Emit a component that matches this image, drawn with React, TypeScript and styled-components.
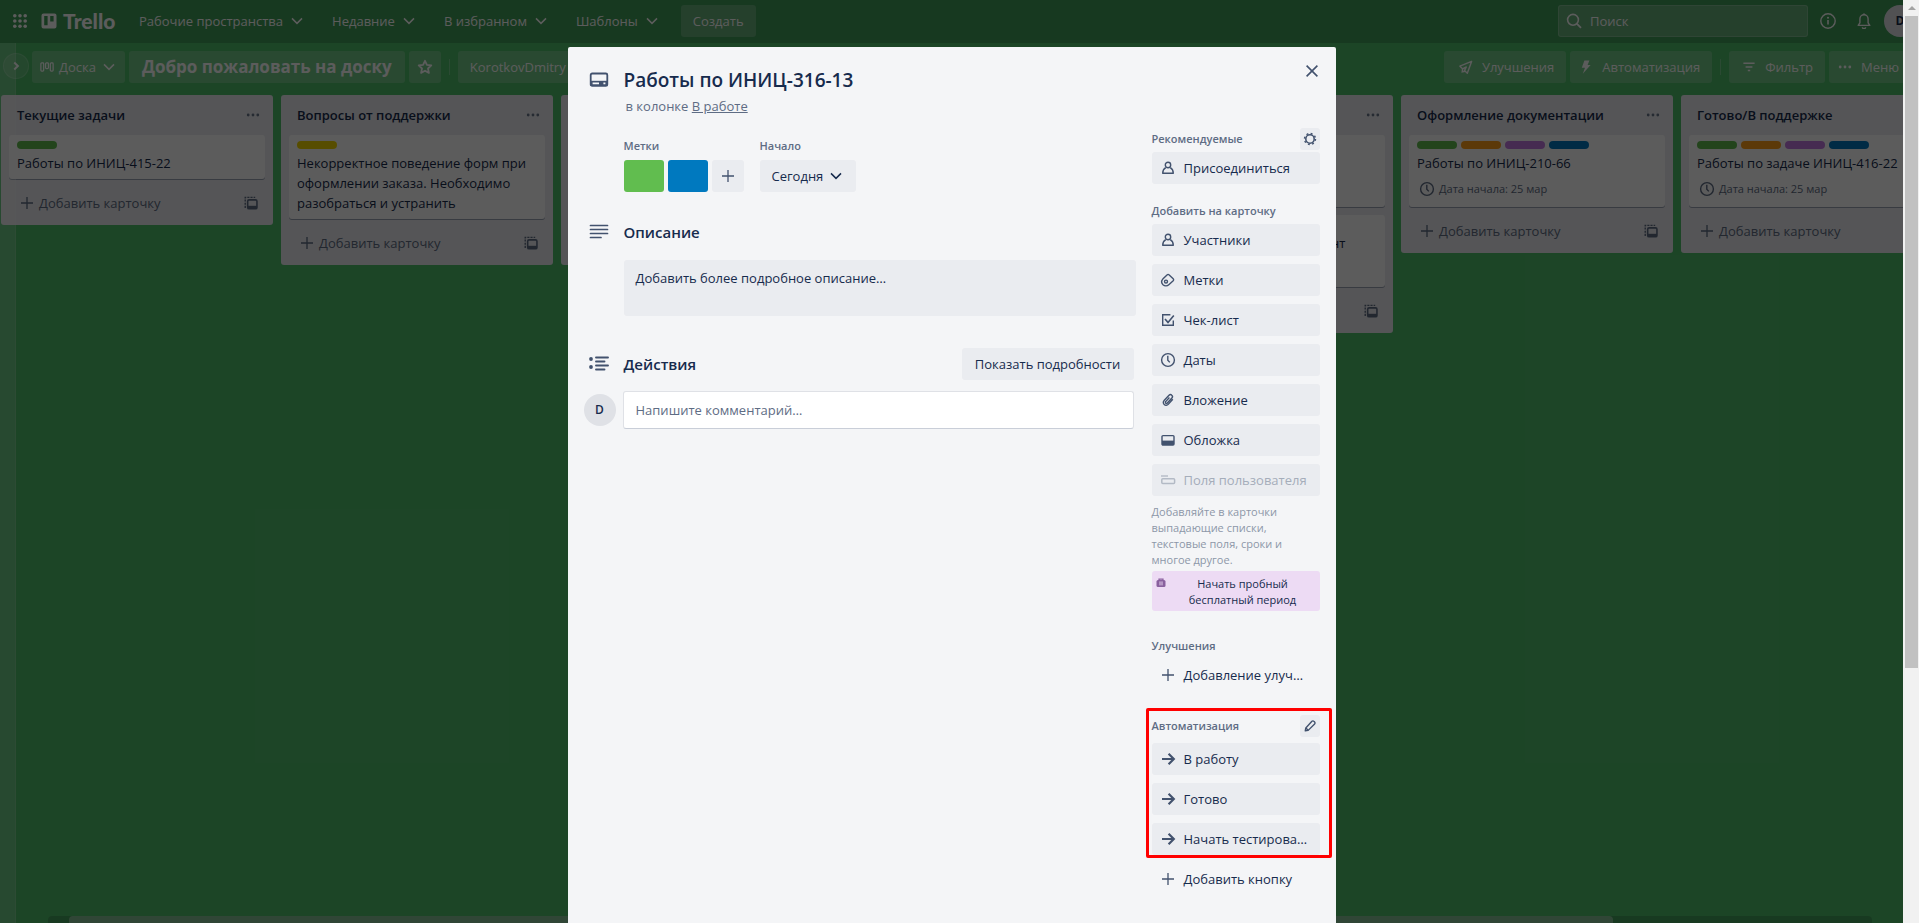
import React from 'react';
import styled, { createGlobalStyle, css } from 'styled-components';

const GlobalStyle = createGlobalStyle`
  *, *::before, *::after { box-sizing: border-box; }
  body {
    margin: 0;
    overflow: hidden;
    font-family: 'Open Sans', 'Noto Sans', sans-serif;
    font-size: 13px;
    line-height: 20px;
    color: #172b4d;
  }
  button, input { font: inherit; color: inherit; border: 0; margin: 0; padding: 0; background: none; }
  button { cursor: pointer; white-space: nowrap; }
  h1, h2, h3, p { margin: 0; padding: 0; font-weight: inherit; font-size: inherit; }
  svg { display: block; flex: none; }
`;

/* ---------- icons ---------- */

type IconProps = { size?: number };

const Svg = ({ size = 16, children }: IconProps & { children: React.ReactNode }) => (
  <svg width={size} height={size} viewBox="0 0 16 16" fill="none" stroke="currentColor" strokeWidth="1.4" aria-hidden="true">
    {children}
  </svg>
);

const ChevronDown = () => (
  <Svg><path d="M3 5.4 8 10.4l5-5" strokeWidth="1.5" /></Svg>
);
const PlusIcon = () => (
  <Svg><path d="M8 2v12M2 8h12" strokeWidth="1.3" /></Svg>
);
const DotsIcon = () => (
  <Svg>
    <g fill="currentColor" stroke="none">
      <circle cx="3.2" cy="8" r="1.4" /><circle cx="8" cy="8" r="1.4" /><circle cx="12.8" cy="8" r="1.4" />
    </g>
  </Svg>
);
const AppsIcon = () => (
  <Svg>
    <g fill="currentColor" stroke="none">
      {[2.8, 8, 13.2].map((y) => [2.8, 8, 13.2].map((x) => <circle key={`${x}-${y}`} cx={x} cy={y} r="1.8" />))}
    </g>
  </Svg>
);
const LogoIcon = () => (
  <Svg>
    <path
      fill="currentColor" stroke="none" fillRule="evenodd"
      d="M2.5.5h11a2 2 0 0 1 2 2v11a2 2 0 0 1-2 2h-11a2 2 0 0 1-2-2v-11a2 2 0 0 1 2-2ZM3.2 2.9v9.4h3.4V2.9H3.2Zm6 0v5.7h3.4V2.9H9.2Z"
    />
  </Svg>
);
const SearchIcon = () => (
  <Svg><circle cx="7" cy="6.8" r="5.4" strokeWidth="1.6" /><path d="m11 10.8 4 4" strokeWidth="1.8" /></Svg>
);
const InfoIcon = () => (
  <Svg>
    <circle cx="8" cy="8" r="7.2" /><path d="M8 7v4.6" strokeWidth="1.6" /><circle cx="8" cy="4.7" r="1" fill="currentColor" stroke="none" />
  </Svg>
);
const BellIcon = () => (
  <Svg>
    <path d="M2.2 12.4h11.6l-1.7-2.6V5.9a4.1 4.1 0 0 0-8.2 0v3.9l-1.7 2.6Z" strokeLinejoin="round" />
    <path d="M6.4 14.2a1.6 1.4 0 0 0 3.2 0" /><path d="M8 .4v1.6" strokeWidth="1.8" />
  </Svg>
);
const BoardIcon = () => (
  <Svg size={14}>
    <rect x="1" y="3.4" width="3.2" height="9.4" rx="1" /><rect x="6.4" y="3.4" width="3.2" height="6.4" rx="1" />
    <rect x="11.8" y="3.4" width="3.2" height="9.4" rx="1" />
  </Svg>
);
const StarIcon = () => (
  <Svg>
    <path d="m8 1.8 1.9 4.1 4.4.5L11 9.5l.9 4.4L8 11.7l-3.9 2.2.9-4.4-3.3-3.1 4.4-.5L8 1.8Z" strokeWidth="1.8" strokeLinejoin="round" />
  </Svg>
);
const ArrowHead = () => (
  <Svg size={14}><path d="M6 4l4.2 4L6 12" strokeWidth="2.2" /></Svg>
);
const RocketIcon = () => (
  <Svg>
    <path d="M13.6 2.4 1.9 7.2l2.6 2.6 3.8-1.8-1.8 3.6 2.8 2.6L13.6 2.4Z" strokeLinejoin="round" /><path d="m4.6 9.8-.4 3 3-.6" />
  </Svg>
);
const BoltIcon = () => (
  <Svg><path d="M6.4 1.4h5L9.6 6h3L4.8 14.8 7 8.8H3.8L6.4 1.4Z" fill="currentColor" stroke="none" /></Svg>
);
const FilterIcon = () => (
  <Svg><path d="M2.4 4.2h11.2M4.6 8h6.8M6.8 11.6h2.4" strokeWidth="1.5" /></Svg>
);
const TemplateIcon = () => (
  <Svg size={14}>
    <path d="M1.4 13.6V1.6h11.4" strokeDasharray="2.4 1.2" strokeWidth="1.6" />
    <rect x="4.2" y="4.4" width="10.6" height="10.2" rx="1.6" strokeWidth="1.8" />
    <path d="M4.4 11.2h10.4v2.6H4.4z" fill="currentColor" stroke="none" />
  </Svg>
);
const ClockIcon = () => (
  <Svg><circle cx="8" cy="8" r="6.4" /><path d="M7.8 3.8v4.4l2 2.2" /></Svg>
);
const PersonIcon = () => (
  <Svg>
    <circle cx="8" cy="5" r="2.7" />
    <path d="M5.8 7.6C3.6 8.8 2.7 10.8 2.7 13.2h10.6c0-2.400-.9-4.400-3.100-5.600" strokeLinejoin="round" />
  </Svg>
);
const TagIcon = () => (
  <Svg>
    <path d="M7 2.9a1.6 1.6 0 0 1 2.2 0l4 3.9a1.4 1.4 0 0 1 0 2l-4.4 4c-1.6 1.4-4.2 1.4-5.8-.1-1.6-1.6-1.6-4-.2-5.6L7 2.9Z" />
    <circle cx="6" cy="9.6" r="1.5" />
  </Svg>
);
const CheckIcon = () => (
  <Svg><path d="M10.4 2.8H2.7v10.5h10.6V8.6" /><path d="m5 7 3 3.4 5.8-7" strokeWidth="1.6" /></Svg>
);
const ClipIcon = () => (
  <Svg>
    <path
      d="m12.8 7.2-4.6 5.2c-1 1.1-2.8 1.3-4 .2-1.2-1.1-1.2-2.9-.1-4L9 3.3c.8-.8 2-.9 2.8-.1.8.7.8 2 .1 2.8L7.3 11c-.4.5-1.1.5-1.6.1-.4-.4-.4-1.1 0-1.5l3.7-4.1"
    />
  </Svg>
);
const CoverIcon = () => (
  <Svg><rect x="2" y="3.6" width="12" height="9.4" rx="1" /><path d="M2 8.6h12V13H2z" fill="currentColor" stroke="none" /></Svg>
);
const FieldsIcon = () => (
  <Svg><path d="M1 4h7" /><rect x="1.8" y="6.8" width="12.8" height="4.6" rx="1" strokeWidth="1.5" /></Svg>
);
const GearIcon = () => (
  <Svg size={14}>
    <circle cx="8" cy="8" r="4.8" strokeWidth="1.8" />
    <circle cx="8" cy="8" r="6.3" strokeWidth="1.6" strokeDasharray="2.2 2.748" />
  </Svg>
);
const PencilIcon = () => (
  <Svg size={14}>
    <path d="m2.600 13.600.6-3.400 7-7.600a1.500 1.500 0 0 1 2.200 0l.9.9a1.500 1.500 0 0 1 0 2.100l-7.400 7.400-3.300.6Z" strokeWidth="1.6" strokeLinejoin="round" />
    <path d="m3.3 10.2 2.6 2.6" strokeWidth="1.6" />
  </Svg>
);
const ArrowIcon = () => (
  <Svg><path d="M2 8h11.4M8.6 2.8 13.8 8l-5.2 5.2" strokeWidth="2.2" /></Svg>
);
const CloseIcon = () => (
  <Svg><path d="m2.6 2.6 10.8 10.8M13.4 2.6 2.6 13.4" strokeWidth="1.6" /></Svg>
);
const BriefcaseIcon = () => (
  <svg width="10" height="10" viewBox="0 0 10 10" aria-hidden="true">
    <rect x=".5" y="2" width="9" height="7" rx="1.5" fill="#89609e" />
    <path d="M3 2.4V1.2h4v1.2" fill="none" stroke="#89609e" strokeWidth="1.2" />
    <path d="M4 3.4v4M6 3.4v4" stroke="#eddbf4" strokeWidth=".9" />
  </svg>
);
const CardIcon = () => (
  <svg width="20" height="16" viewBox="0 0 20 16" aria-hidden="true">
    <rect x="1.7" y="1.5" width="16.6" height="12.4" rx="1.5" fill="none" stroke="currentColor" strokeWidth="1.8" />
    <path d="M1.5 8.8h17v5h-17z" fill="currentColor" />
    <path d="M3.6 11.4h6.4M14.4 11.4h2" stroke="#f4f5f7" strokeWidth="1.6" />
  </svg>
);
const TextIcon = () => (
  <svg width="20" height="16" viewBox="0 0 20 16" aria-hidden="true">
    <path d="M1.5 1.5h17M1.5 5.5h17M1.5 9.5h17M1.5 13.5h10.5" stroke="currentColor" strokeWidth="1.7" strokeLinecap="round" />
  </svg>
);
const ActivityIcon = () => (
  <svg width="20" height="16" viewBox="0 0 20 16" aria-hidden="true">
    <path d="M7 1.5h12M7 5.5h8.5M7 9.5h12M7 13.5h8.5" stroke="currentColor" strokeWidth="1.9" strokeLinecap="round" />
    <circle cx="2" cy="3" r="1.9" fill="currentColor" /><circle cx="2" cy="11" r="1.9" fill="currentColor" />
  </svg>
);

/* ---------- page frame ---------- */

const Page = styled.div`
  display: flex;
  height: 100vh;
`;
const Viewport = styled.div`
  position: relative;
  flex: 1;
  min-width: 0;
  overflow: hidden;
`;
const Shell = styled.div`
  display: flex;
  flex-direction: column;
  width: 100vw;
  height: 100%;
  background: #4fbf6b;
`;
const ScrollTrack = styled.div`
  flex: none;
  width: 16px;
  padding: 0 1px 0 2px;
  background: #f1f1f1;
`;
const ScrollArrow = styled.div`
  display: flex;
  align-items: center;
  justify-content: center;
  height: 16px;
  color: #a3a3a3;
`;
const ScrollThumb = styled.div`
  height: calc(71% - 3px);
  background: #c1c1c1;
`;

/* ---------- top navigation ---------- */

const Nav = styled.header`
  display: flex;
  flex: none;
  align-items: flex-start;
  height: 43px;
  padding: 5px 3px 0 4px;
  color: #fff;
  background: rgba(0, 0, 0, 0.17);
`;
const NavGroup = styled.nav`
  display: flex;
  flex: 1;
  align-items: center;
  gap: 4px;
`;
const SquareButton = styled.button`
  display: flex;
  align-items: center;
  justify-content: center;
  width: 32px;
  height: 32px;
`;
const Logo = styled.a`
  display: flex;
  align-items: center;
  gap: 6px;
  width: 82px;
  margin-left: 1px;
  font: 900 21px/24px Lato, sans-serif;
  color: #fff;
  text-decoration: none;
`;
const NavButton = styled.button`
  display: flex;
  align-items: center;
  gap: 6px;
  height: 32px;
  padding: 0 11px 0 12px;
`;
const CreateButton = styled.button`
  height: 32px;
  margin-left: 6px;
  padding: 0 12px;
  border-radius: 3px;
  background: rgba(255, 255, 255, 0.2);
`;
const NavTools = styled.div`
  display: flex;
  gap: 4px;
`;
const SearchBox = styled.label`
  display: flex;
  align-items: center;
  gap: 8px;
  width: 250px;
  height: 32px;
  padding: 0 7px;
  border: 1px solid rgba(255, 255, 255, 0.2);
  border-radius: 3px;
  background: rgba(255, 255, 255, 0.2);
`;
const SearchInput = styled.input`
  flex: 1;
  min-width: 0;
  &::placeholder { color: #fff; opacity: 1; }
`;
const Avatar = styled.button`
  flex: none;
  width: 32px;
  height: 32px;
  border-radius: 50%;
  font-size: 12px;
  font-weight: 600;
  text-align: center;
  background: #dfe1e6;
`;
const NavAvatar = styled(Avatar)`
  font-weight: 700;
  color: #172b4d;
`;

/* ---------- board ---------- */

const Board = styled.main`
  position: relative;
  display: flex;
  flex: 1;
  flex-direction: column;
  min-height: 0;
`;
const SideStrip = styled.aside`
  position: absolute;
  inset: 0 auto 0 0;
  width: 16px;
  border-right: 1px solid rgba(255, 255, 255, 0.1);
  background: rgba(255, 255, 255, 0.18);
`;
const StripToggle = styled.button`
  position: absolute;
  top: 10px;
  left: 3px;
  display: flex;
  align-items: center;
  justify-content: center;
  width: 26px;
  height: 26px;
  border: 1px solid rgba(255, 255, 255, 0.16);
  border-radius: 50%;
  color: #fff;
  background: rgba(255, 255, 255, 0.12);
`;
const BoardBar = styled.div`
  display: flex;
  flex: none;
  justify-content: space-between;
  padding: 8px 8px 12px 32px;
  color: #fff;
`;
const BarGroup = styled.div`
  display: flex;
  align-items: center;
  gap: 4px;
`;
const BarButton = styled.button<{ $pad?: number }>`
  display: flex;
  align-items: center;
  gap: 8px;
  height: 32px;
  padding: 0 12px 0 ${(p) => p.$pad ?? 8}px;
  border-radius: 3px;
  background: rgba(255, 255, 255, 0.2);
`;
const ViewButton = styled(BarButton)`
  gap: 5px;
  padding: 0 8px;
`;
const StarButton = styled(SquareButton)`
  border-radius: 3px;
  background: rgba(255, 255, 255, 0.2);
`;
const BoardTitle = styled.h1`
  height: 32px;
  padding: 0 13px;
  border-radius: 3px;
  font-size: 17px;
  font-weight: 700;
  line-height: 32px;
  background: rgba(255, 255, 255, 0.2);
`;
const Divider = styled.span`
  width: 1px;
  height: 16px;
  margin: 0 4px;
  background: rgba(255, 255, 255, 0.24);
`;
const Lists = styled.div`
  display: flex;
  flex: 1;
  gap: 8px;
  align-items: flex-start;
  min-height: 0;
  padding-left: 1px;
  overflow: hidden;
`;
const List = styled.section`
  flex: none;
  width: 272px;
  padding: 0 8px 6px;
  border-radius: 3px;
  background: #ebecf0;
`;
const ListHead = styled.div`
  display: flex;
  align-items: center;
  justify-content: space-between;
  height: 40px;
  padding: 0 4px 0 8px;
  color: #6b778c;
`;
const ListTitle = styled.h2`
  font-weight: 600;
  color: #172b4d;
  white-space: nowrap;
`;
const Card = styled.article`
  margin-bottom: 8px;
  padding: 6px 8px;
  border-radius: 3px;
  background: #fff;
  box-shadow: 0 1px 0 rgba(9, 30, 66, 0.35);
`;
const Labels = styled.div`
  display: flex;
  gap: 4px;
  margin-bottom: 4px;
`;
const Label = styled.span<{ $color: string }>`
  width: 40px;
  height: 8px;
  border-radius: 4px;
  background: ${(p) => p.$color};
`;
const Badge = styled.div`
  display: flex;
  align-items: center;
  gap: 4px;
  height: 28px;
  padding: 4px 0 0 2px;
  font-size: 11px;
  color: #5e6c84;
`;
const ListFoot = styled.div`
  display: flex;
  align-items: center;
  justify-content: space-between;
  height: 32px;
  padding: 0 7px 0 10px;
  color: #5e6c84;
`;
const AddCard = styled.button`
  display: flex;
  align-items: center;
  gap: 4px;
`;
const BoardScroll = styled.div`
  flex: none;
  height: 7px;
  margin: 0 47px 0 48px;
  padding-left: 21px;
  border-radius: 4px 4px 0 0;
  background: rgba(0, 0, 0, 0.15);
`;
const BoardScrollThumb = styled.div`
  width: calc(86% - 7px);
  height: 100%;
  border-radius: 4px 4px 0 0;
  background: rgba(255, 255, 255, 0.36);
`;

/* ---------- card dialog ---------- */

const Overlay = styled.div`
  position: absolute;
  inset: 0;
  display: flex;
  justify-content: center;
  padding-top: 47px;
  background: rgba(0, 0, 0, 0.64);
`;
const Dialog = styled.div`
  position: relative;
  width: 768px;
  padding: 21px 16px 0;
  border-radius: 2px 2px 0 0;
  background: #f4f5f7;
`;
const CloseButton = styled(SquareButton)`
  position: absolute;
  top: 8px;
  right: 8px;
  color: #42526e;
`;
const Row = styled.div`
  display: grid;
  grid-template-columns: 40px 1fr;
  align-items: center;
  color: #42526e;
  & > svg { margin-left: 5px; }
`;
const DialogTitle = styled.h2`
  font-size: 19px;
  font-weight: 600;
  line-height: 24px;
  color: #172b4d;
`;
const ListNote = styled.p`
  margin: 4px 0 10px 42px;
  color: #5e6c84;
`;
const ListLink = styled.a`
  color: inherit;
`;
const Columns = styled.div`
  display: flex;
  gap: 16px;
`;
const MainColumn = styled.div`
  flex: 1;
  padding-top: 10px;
`;
const Details = styled.div`
  display: flex;
  gap: 16px;
  padding-left: 40px;
`;
const DetailTitle = styled.h3`
  margin-bottom: 4px;
  font-size: 11px;
  font-weight: 600;
  color: #5e6c84;
`;
const Swatches = styled.div`
  display: flex;
  gap: 4px;
`;
const Swatch = styled.button<{ $color: string }>`
  width: 40px;
  height: 32px;
  border-radius: 3px;
  background: ${(p) => p.$color};
`;
const soft = css`
  border-radius: 3px;
  background: rgba(9, 30, 66, 0.04);
`;
const AddLabel = styled(SquareButton)`
  ${soft}
  color: #42526e;
`;
const DateButton = styled.button`
  ${soft}
  display: flex;
  align-items: center;
  gap: 5px;
  width: 96px;
  height: 32px;
  padding-left: 12px;
`;
const SectionRow = styled(Row)`
  margin: 28px 0 16px;
`;
const SectionTitle = styled.h3`
  font-size: 15px;
  font-weight: 600;
  line-height: 24px;
  color: #172b4d;
`;
const Description = styled.button`
  ${soft}
  display: flex;
  width: 512px;
  height: 56px;
  margin-left: 40px;
  padding: 8px 12px;
`;
const ActivityRow = styled(Row)`
  grid-template-columns: 40px 1fr auto;
  margin: 32px 2px 11px 0;
`;
const DetailsToggle = styled.button`
  ${soft}
  min-width: 172px;
  height: 32px;
  color: #172b4d;
`;
const CommentForm = styled.div`
  display: flex;
  gap: 7px;
  align-items: center;
  margin-right: 2px;
`;
const CommentInput = styled.input`
  flex: 1;
  height: 38px;
  padding: 0 12px;
  border: 1px solid #dfe1e6;
  border-bottom-color: #c9ced8;
  border-radius: 3px;
  background: #fff;
  &::placeholder { color: #5e6c84; opacity: 1; }
`;

/* ---------- dialog side column ---------- */

const SideColumn = styled.div`
  display: flex;
  flex-direction: column;
  flex: none;
  width: 168px;
`;
const SideSection = styled.section<{ $gap: number }>`
  position: relative;
  display: flex;
  flex-direction: column;
  gap: 8px;
  margin-bottom: ${(p) => p.$gap}px;
`;
const SideHead = styled.div<{ $space?: number }>`
  display: flex;
  align-items: center;
  justify-content: space-between;
  height: 26px;
  margin-bottom: ${(p) => (p.$space ?? 0) - 8}px;
`;
const SideTitle = styled.h3`
  font-size: 11px;
  font-weight: 600;
  color: #5e6c84;
`;
const HeadButton = styled.button`
  ${soft}
  display: flex;
  align-items: center;
  justify-content: center;
  width: 20px;
  height: 22px;
  color: #42526e;
`;
const SideButton = styled.button<{ $plain?: boolean }>`
  ${soft}
  ${(p) => p.$plain && css`background: transparent;`}
  display: flex;
  align-items: center;
  gap: 8px;
  height: 32px;
  padding: 0 8px;
  & > svg { color: #42526e; }
  &:disabled { color: #a5adba; cursor: default; }
  &:disabled > svg { color: #b3bac5; }
`;
const Hint = styled.p`
  margin-bottom: -5px;
  font-size: 11px;
  line-height: 16px;
  color: #8d97a8;
`;
const TrialButton = styled.button`
  display: grid;
  grid-template-columns: 10px 1fr;
  gap: 4px;
  align-items: start;
  height: 40px;
  padding: 5px 4px;
  border-radius: 3px;
  font-size: 11px;
  line-height: 16px;
  white-space: normal;
  background: #eddbf4;
  & > svg { margin-top: 2px; }
`;
const Highlight = styled.div`
  position: absolute;
  inset: -5px -12px -3px -6px;
  border: 3px solid #f00;
  border-radius: 2px;
  pointer-events: none;
`;

/* ---------- data ---------- */

const color = {
  green: '#61bd4f', yellow: '#f2d600', orange: '#ff9f1a', purple: '#c377e0', blue: '#0079bf',
};
const allLabels = [color.green, color.orange, color.purple, color.blue];

type CardData = { labels: string[]; text: string; date?: string };
const lists: { title: string; cards: CardData[] }[] = [
  { title: 'Текущие задачи', cards: [{ labels: [color.green], text: 'Работы по ИНИЦ-415-22' }] },
  {
    title: 'Вопросы от поддержки',
    cards: [{ labels: [color.yellow], text: 'Некорректное поведение форм при оформлении заказа. Необходимо разобраться и устранить' }],
  },
  {
    title: 'Анализ',
    cards: [{ labels: [color.yellow], text: 'Некорректное поведение форм при оформлении заказа. Необходимо разобраться и устранить' }],
  },
  { title: 'В работе', cards: [] },
  {
    title: 'Тестирование',
    cards: [
      { labels: [color.green], text: 'Работы по ИНИЦ-210-12', date: '25 мар' },
      { labels: [color.green], text: 'Согласовать с отделом документ', date: '25 мар' },
    ],
  },
  { title: 'Оформление документации', cards: [{ labels: allLabels, text: 'Работы по ИНИЦ-210-66', date: '25 мар' }] },
  { title: 'Готово/В поддержке', cards: [{ labels: allLabels, text: 'Работы по задаче ИНИЦ-416-22', date: '25 мар' }] },
];

const cardActions = [
  { text: 'Участники', icon: <PersonIcon /> },
  { text: 'Метки', icon: <TagIcon /> },
  { text: 'Чек-лист', icon: <CheckIcon /> },
  { text: 'Даты', icon: <ClockIcon /> },
  { text: 'Вложение', icon: <ClipIcon /> },
  { text: 'Обложка', icon: <CoverIcon /> },
];

export default function App() {
  return (
    <Page>
      <GlobalStyle />
      <Viewport>
        <Shell>
          <Nav>
            <NavGroup>
              <SquareButton aria-label="Приложения"><AppsIcon /></SquareButton>
              <Logo href="#"><LogoIcon />Trello</Logo>
              {['Рабочие пространства', 'Недавние', 'В избранном', 'Шаблоны'].map((t) => (
                <NavButton key={t}>{t}<ChevronDown /></NavButton>
              ))}
              <CreateButton>Создать</CreateButton>
            </NavGroup>
            <NavTools>
              <SearchBox>
                <SearchIcon />
                <SearchInput type="text" placeholder="Поиск" aria-label="Поиск" />
              </SearchBox>
              <SquareButton aria-label="Информация"><InfoIcon /></SquareButton>
              <SquareButton aria-label="Уведомления"><BellIcon /></SquareButton>
              <NavAvatar>D</NavAvatar>
            </NavTools>
          </Nav>

          <Board>
            <BoardBar>
              <BarGroup>
                <ViewButton><BoardIcon />Доска<ChevronDown /></ViewButton>
                <BoardTitle>Добро пожаловать на доску</BoardTitle>
                <StarButton aria-label="В избранное"><StarIcon /></StarButton>
                <Divider />
                <BarButton $pad={12}>KorotkovDmitry</BarButton>
              </BarGroup>
              <BarGroup>
                <BarButton $pad={14}><RocketIcon />Улучшения</BarButton>
                <BarButton><BoltIcon />Автоматизация</BarButton>
                <Divider />
                <BarButton $pad={12}><FilterIcon />Фильтр</BarButton>
                <BarButton><DotsIcon />Меню</BarButton>
              </BarGroup>
            </BoardBar>
            <Lists>
              {lists.map((list) => (
                <List key={list.title}>
                  <ListHead><ListTitle>{list.title}</ListTitle><DotsIcon /></ListHead>
                  {list.cards.map((card) => (
                    <Card key={card.text}>
                      <Labels>{card.labels.map((c) => <Label key={c} $color={c} />)}</Labels>
                      <p>{card.text}</p>
                      {card.date && <Badge><ClockIcon />Дата начала: {card.date}</Badge>}
                    </Card>
                  ))}
                  <ListFoot>
                    <AddCard><PlusIcon />Добавить карточку</AddCard>
                    <TemplateIcon />
                  </ListFoot>
                </List>
              ))}
            </Lists>
            <BoardScroll><BoardScrollThumb /></BoardScroll>
            <SideStrip>
              <StripToggle aria-label="Развернуть"><ArrowHead /></StripToggle>
            </SideStrip>
          </Board>
        </Shell>

        <Overlay>
          <Dialog role="dialog" aria-label="Работы по ИНИЦ-316-13">
            <CloseButton aria-label="Закрыть"><CloseIcon /></CloseButton>
            <Row><CardIcon /><DialogTitle>Работы по ИНИЦ-316-13</DialogTitle></Row>
            <ListNote>в колонке <ListLink href="#">В работе</ListLink></ListNote>
            <Columns>
              <MainColumn>
                <Details>
                  <div>
                    <DetailTitle>Метки</DetailTitle>
                    <Swatches>
                      <Swatch $color={color.green} aria-label="Зелёная метка" />
                      <Swatch $color={color.blue} aria-label="Синяя метка" />
                      <AddLabel aria-label="Добавить метку"><PlusIcon /></AddLabel>
                    </Swatches>
                  </div>
                  <div>
                    <DetailTitle>Начало</DetailTitle>
                    <DateButton>Сегодня<ChevronDown /></DateButton>
                  </div>
                </Details>
                <SectionRow><TextIcon /><SectionTitle>Описание</SectionTitle></SectionRow>
                <Description>Добавить более подробное описание…</Description>
                <ActivityRow>
                  <ActivityIcon />
                  <SectionTitle>Действия</SectionTitle>
                  <DetailsToggle>Показать подробности</DetailsToggle>
                </ActivityRow>
                <CommentForm>
                  <Avatar>D</Avatar>
                  <CommentInput type="text" placeholder="Напишите комментарий…" aria-label="Комментарий" />
                </CommentForm>
              </MainColumn>

              <SideColumn>
                <SideSection $gap={14}>
                  <SideHead>
                    <SideTitle>Рекомендуемые</SideTitle>
                    <HeadButton aria-label="Настройки"><GearIcon /></HeadButton>
                  </SideHead>
                  <SideButton><PersonIcon />Присоединиться</SideButton>
                </SideSection>
                <SideSection $gap={22}>
                  <SideHead><SideTitle>Добавить на карточку</SideTitle></SideHead>
                  {cardActions.map((a) => <SideButton key={a.text}>{a.icon}{a.text}</SideButton>)}
                  <SideButton disabled><FieldsIcon />Поля пользователя</SideButton>
                  <Hint>Добавляйте в карточки выпадающие списки, текстовые поля, сроки и многое другое.</Hint>
                  <TrialButton><BriefcaseIcon /><span>Начать пробный бесплатный период</span></TrialButton>
                </SideSection>
                <SideSection $gap={22}>
                  <SideHead><SideTitle>Улучшения</SideTitle></SideHead>
                  <SideButton $plain><PlusIcon />Добавление улуч…</SideButton>
                </SideSection>
                <SideSection $gap={8}>
                  <SideHead $space={4}>
                    <SideTitle>Автоматизация</SideTitle>
                    <HeadButton aria-label="Изменить"><PencilIcon /></HeadButton>
                  </SideHead>
                  {['В работу', 'Готово', 'Начать тестирова…'].map((t) => (
                    <SideButton key={t}><ArrowIcon />{t}</SideButton>
                  ))}
                  <Highlight />
                </SideSection>
                <SideButton $plain><PlusIcon />Добавить кнопку</SideButton>
              </SideColumn>
            </Columns>
          </Dialog>
        </Overlay>
      </Viewport>

      <ScrollTrack>
        <ScrollArrow><svg width="8" height="4" viewBox="0 0 8 4"><path d="M0 4 4 0l4 4Z" fill="currentColor" /></svg></ScrollArrow>
        <ScrollThumb />
      </ScrollTrack>
    </Page>
  );
}
